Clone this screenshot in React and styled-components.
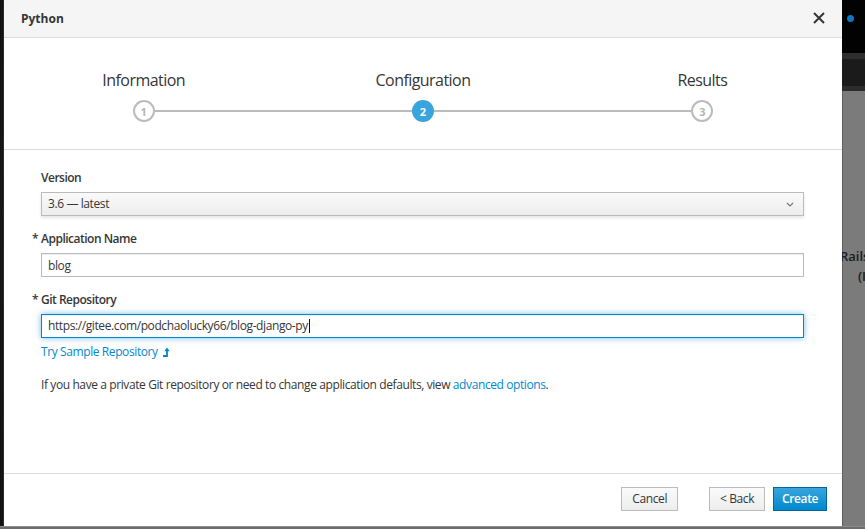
import React from "react";
import styled, { createGlobalStyle, css } from "styled-components";

const GlobalStyle = createGlobalStyle`
  html, body { margin: 0; padding: 0; }
  body { font-family: "Open Sans", "Liberation Sans", sans-serif; color: #363636; }
  * { box-sizing: border-box; }
`;

const Screen = styled.div`
  display: grid;
  grid-template-columns: 4px 838px 1fr;
  grid-template-rows: 526px 3px;
  width: 865px;
  height: 529px;
  overflow: hidden;
  background: #0e0e0e;
`;

const LeftEdge = styled.div`
  background: linear-gradient(180deg, #121212 0%, #171717 40%, #111 100%);
  border-right: 1px solid #2a2a2a;
`;

const BottomStrip = styled.div`
  grid-column: 1 / -1;
  background: linear-gradient(180deg, #8c8c8c 0 1px, #6d6d6d 1px 100%);
`;

/* ---------- backdrop on the right ---------- */
const Backdrop = styled.div`
  display: flex;
  flex-direction: column;
  overflow: hidden;
`;

const TopBar = styled.div`
  height: 53px;
  background: #020202;
  padding: 15px 0 0 2px;
  display: flex;
  flex-direction: column;
  align-items: flex-start;
`;

const Dot = styled.span`
  width: 7px;
  height: 7px;
  border-radius: 50%;
  background: #0a78c2;
  margin-left: 3px;
`;

const BarStrip = styled.div`
  height: ${(p) => p.$h}px;
  background: ${(p) => p.$bg};
`;

const GrayArea = styled.div`
  flex: 1;
  background: #7b7b7b;
  border-left: 1px solid #5e5e5e;
  padding-top: 155px;
  font-size: 13px;
  font-weight: 600;
  line-height: 20px;
  color: #1c1c1c;
  white-space: nowrap;
`;

const GhostLine = styled.div`
  margin-left: ${(p) => p.$indent}px;
`;

/* ---------- modal ---------- */
const Modal = styled.div`
  display: flex;
  flex-direction: column;
  background: #fff;
  box-shadow: 1px 0 0 #3a3a3a;
  letter-spacing: -0.4px;
`;

const Header = styled.div`
  height: 38px;
  flex: none;
  display: flex;
  align-items: center;
  justify-content: space-between;
  padding: 0 17px 1px 17px;
  background: #f5f5f5;
  border-bottom: 1px solid #dcdcdc;
`;

const Title = styled.h4`
  margin: 0;
  font-size: 12px;
  font-weight: 700;
  letter-spacing: 0;
  color: #363636;
`;

const CloseButton = styled.button`
  border: 0;
  background: none;
  padding: 0;
  width: 12px;
  height: 12px;
  display: flex;
  cursor: pointer;
`;

const Steps = styled.ol`
  list-style: none;
  margin: 0;
  flex: none;
  display: grid;
  grid-template-columns: repeat(3, 1fr);
  padding: 31px 0 27px;
  border-bottom: 1px solid #dcdcdc;
`;

const Step = styled.li`
  display: flex;
  flex-direction: column;
  align-items: center;
`;

const StepLabel = styled.span`
  font-size: 16px;
  line-height: 22px;
  letter-spacing: -0.55px;
  color: #363636;
  margin-bottom: 9px;
`;

const Track = styled.div`
  width: 100%;
  display: flex;
  align-items: center;
`;

const Segment = styled.span`
  flex: 1;
  height: 2px;
  background: ${(p) => (p.$hidden ? "transparent" : "#bbbbbb")};
`;

const Circle = styled.span`
  width: 22px;
  height: 22px;
  border-radius: 50%;
  display: flex;
  align-items: center;
  justify-content: center;
  font-size: 11px;
  font-weight: 700;
  letter-spacing: 0;
  ${(p) =>
    p.$active
      ? css`
          background: #39a5dc;
          color: #fff;
        `
      : css`
          background: #fff;
          border: 2px solid #bbbbbb;
          color: #b5b5b5;
        `}
`;

const Body = styled.div`
  flex: 1;
  padding: 20px 38px 0 37px;
`;

const Form = styled.div`
  display: flex;
  flex-direction: column;
  gap: 15px;
`;

const Group = styled.div`
  display: flex;
  flex-direction: column;
`;

const Label = styled.label`
  display: block;
  font-size: 12px;
  font-weight: 600;
  line-height: 16px;
  letter-spacing: -0.5px;
  margin-bottom: 6px;
  color: #363636;
`;

const Required = styled.span`
  display: inline-block;
  width: 9px;
  margin-left: -9px;
`;

const fieldBase = css`
  width: 100%;
  height: 24px;
  border: 1px solid #bbbbbb;
  padding: 0 6px;
  font-family: "Open Sans", "Liberation Sans", sans-serif;
  font-size: 12px;
  line-height: 22px;
  letter-spacing: -0.4px;
  color: #363636;
  display: flex;
  align-items: center;
`;

const Select = styled.div`
  ${fieldBase}
  justify-content: space-between;
  background: linear-gradient(180deg, #fafafa 0%, #ededed 100%);
  box-shadow: 0 2px 3px rgba(3, 3, 3, 0.1);
  padding-right: 9px;
`;

const TextInput = styled.input`
  ${fieldBase}
  background: #fff;
  outline: none;
  box-shadow: inset 0 1px 1px rgba(3, 3, 3, 0.075);
`;

const FocusedInput = styled.div`
  ${fieldBase}
  background: #fff;
  border-color: #0088ce;
  box-shadow: inset 0 1px 1px rgba(3, 3, 3, 0.075), 0 0 6px rgba(0, 136, 206, 0.55);
`;

const Caret = styled.span`
  display: inline-block;
  width: 1px;
  height: 14px;
  background: #111;
  margin-left: 1px;
`;

const Link = styled.a`
  color: #0088ce;
  text-decoration: none;
  font-size: 12px;
  line-height: 16px;
  cursor: pointer;
`;

const SampleLink = styled(Link)`
  margin-top: 6px;
  display: inline-flex;
  align-items: center;
  align-self: flex-start;
`;

const HelpText = styled.p`
  margin: 17px 0 0;
  font-size: 12px;
  line-height: 16px;
  color: #363636;
`;

const Footer = styled.div`
  flex: none;
  border-top: 1px solid #dcdcdc;
  padding: 13px 15px 15px;
  display: flex;
  justify-content: flex-end;
  gap: 8px;
`;

const Button = styled.button`
  height: 24px;
  padding: 0 10px;
  font-family: "Open Sans", "Liberation Sans", sans-serif;
  font-size: 12px;
  line-height: 22px;
  letter-spacing: -0.4px;
  cursor: pointer;
  margin-right: ${(p) => p.$gapAfter || 0}px;
  ${(p) =>
    p.$primary
      ? css`
          padding: 0 8px;
          color: #fff;
          font-weight: 600;
          background: linear-gradient(180deg, #39a5dc 0%, #0088ce 100%);
          border: 1px solid #00659c;
        `
      : css`
          color: #363636;
          background: linear-gradient(180deg, #fafafa 0%, #ededed 100%);
          border: 1px solid #bbbbbb;
        `}
`;

const steps = [
  { label: "Information", n: 1 },
  { label: "Configuration", n: 2, active: true },
  { label: "Results", n: 3 },
];

function CloseIcon() {
  return (
    <svg width="12" height="12" viewBox="0 0 12 12">
      <path d="M1 1 L11 11 M11 1 L1 11" stroke="#363636" strokeWidth="2" fill="none" />
    </svg>
  );
}

function Chevron() {
  return (
    <svg width="8" height="5" viewBox="0 0 8 5">
      <polyline points="1,1 4,4 7,1" stroke="#777" strokeWidth="1.2" fill="none" />
    </svg>
  );
}

function LevelUp() {
  return (
    <svg width="9" height="10" viewBox="0 0 9 10" style={{ marginLeft: 4 }}>
      <path d="M1 9 H5 V3.5" stroke="#0088ce" strokeWidth="1.8" fill="none" />
      <polygon points="2.3,4.2 5,0.6 7.7,4.2" fill="#0088ce" />
    </svg>
  );
}

export default function App() {
  return (
    <>
      <GlobalStyle />
      <Screen>
        <LeftEdge />
        <Modal>
          <Header>
            <Title>Python</Title>
            <CloseButton aria-label="Close">
              <CloseIcon />
            </CloseButton>
          </Header>
          <Steps>
            {steps.map((s, i) => (
              <Step key={s.n}>
                <StepLabel>{s.label}</StepLabel>
                <Track>
                  <Segment $hidden={i === 0} />
                  <Circle $active={s.active}>{s.n}</Circle>
                  <Segment $hidden={i === steps.length - 1} />
                </Track>
              </Step>
            ))}
          </Steps>
          <Body>
            <Form>
              <Group>
                <Label>Version</Label>
                <Select>
                  <span>3.6 — latest</span>
                  <Chevron />
                </Select>
              </Group>
              <Group>
                <Label>
                  <Required>*</Required>Application Name
                </Label>
                <TextInput value="blog" readOnly />
              </Group>
              <Group>
                <Label>
                  <Required>*</Required>Git Repository
                </Label>
                <FocusedInput>
                  <span>https://gitee.com/podchaolucky66/blog-django-py</span>
                  <Caret />
                </FocusedInput>
                <SampleLink>
                  Try Sample Repository
                  <LevelUp />
                </SampleLink>
              </Group>
            </Form>
            <HelpText>
              If you have a private Git repository or need to change application defaults, view{" "}
              <Link>advanced options</Link>.
            </HelpText>
          </Body>
          <Footer>
            <Button $gapAfter={23}>Cancel</Button>
            <Button>&lt; Back</Button>
            <Button $primary>Create</Button>
          </Footer>
        </Modal>
        <Backdrop>
          <TopBar>
            <Dot />
          </TopBar>
          <BarStrip $h={6} $bg="#2e2e2e" />
          <BarStrip $h={27} $bg="#1b1b1b" />
          <BarStrip $h={5} $bg="#2c2c2c" />
          <GrayArea>
            <GhostLine $indent={-3}>Rails</GhostLine>
            <GhostLine $indent={15}>(I</GhostLine>
          </GrayArea>
        </Backdrop>
        <BottomStrip />
      </Screen>
    </>
  );
}
